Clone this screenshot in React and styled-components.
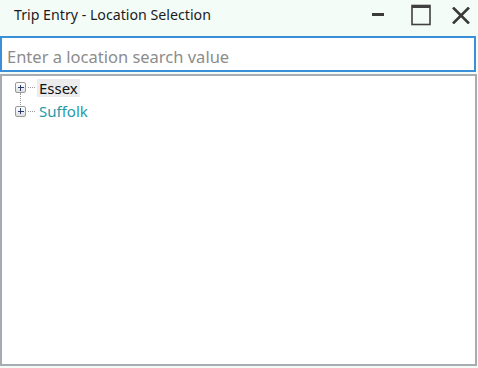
import styled, { createGlobalStyle } from 'styled-components';

const GlobalStyle = createGlobalStyle`
  html, body {
    margin: 0;
    padding: 0;
    background: #ffffff;
  }
  * { box-sizing: border-box; }
`;

const Window = styled.div`
  width: 478px;
  height: 368px;
  display: flex;
  flex-direction: column;
  background: #f4fcf8;
  font-family: "Noto Sans", "Open Sans", sans-serif;
`;

const TitleBar = styled.div`
  height: 36px;
  display: flex;
  align-items: center;
  padding: 0 8px 0 14px;
`;

const Title = styled.h1`
  flex: 1;
  margin: 0;
  font-size: 14.2px;
  font-weight: normal;
  color: #1c1c1c;
  padding-bottom: 8px;
`;

const Controls = styled.div`
  display: flex;
  align-items: center;
  padding-bottom: 6px;
`;

const ControlBtn = styled.button`
  margin-left: ${(p) => p.gap || 0}px;
  height: 30px;
  border: none;
  background: none;
  padding: 0;
  display: flex;
  align-items: center;
  justify-content: center;
`;

const Search = styled.input`
  height: 36px;
  width: 476px;
  margin: 0;
  border: 2px solid #3a8fd8;
  padding: 4px 6px 0 5px;
  font-family: "Noto Sans", "Open Sans", sans-serif;
  font-size: 16.5px;
  color: #222;
  background: #fff;
  outline: none;
  caret-color: #222;
  &::placeholder {
    color: #8c8c8c;
  }
`;

const TreePanel = styled.div`
  margin-top: 2px;
  width: 477px;
  height: 292px;
  background: #fff;
  border: 2px solid #a7abb2;
  padding: 0 0 0 13px;
`;

const Node = styled.div`
  position: relative;
  height: 23.5px;
  display: flex;
  align-items: center;
`;

const Expander = styled.span`
  width: 11px;
  height: 11px;
  border: 1px solid #9a9a9a;
  border-radius: 2px;
  background: linear-gradient(#ffffff, #dedede);
  position: relative;
  &::before {
    content: '';
    position: absolute;
    left: 1.5px;
    top: 4px;
    width: 6px;
    height: 1px;
    background: #2a3c6e;
  }
  &::after {
    content: '';
    position: absolute;
    left: 4px;
    top: 1.5px;
    width: 1px;
    height: 6px;
    background: #2a3c6e;
  }
`;

const Dots = styled.span`
  width: 7px;
  height: 1px;
  margin: 0 2px 0 2px;
  border-top: 1px dotted #9a9a9a;
`;

const VLine = styled.span`
  position: absolute;
  left: 5px;
  top: 17px;
  height: 12px;
  border-left: 1px dotted #9a9a9a;
`;

const Label = styled.span`
  font-family: "Noto Sans", "Open Sans", sans-serif;
  font-size: 15px;
  padding: 0 2px;
  line-height: 18px;
  color: ${(p) => p.color || '#111'};
  background: ${(p) => (p.selected ? '#ececec' : 'transparent')};
`;

const nodes = [
  { name: 'Essex', selected: true, color: '#111', last: false },
  { name: 'Suffolk', selected: false, color: '#2699a6', last: true },
];

export default function App() {
  return (
    <Window>
      <GlobalStyle />
      <TitleBar>
        <Title>Trip Entry - Location Selection</Title>
        <Controls>
          <ControlBtn>
            <svg width="12" height="6" viewBox="0 0 12 6">
              <rect x="0" y="1" width="12" height="3" fill="#3a3a3a" />
            </svg>
          </ControlBtn>
          <ControlBtn gap={27}>
            <svg width="20" height="22" viewBox="0 0 20 22">
              <rect x="1" y="1.5" width="18" height="19" fill="none" stroke="#404040" strokeWidth="1.6" />
              <rect x="1" y="1" width="18" height="3" fill="#404040" />
            </svg>
          </ControlBtn>
          <ControlBtn gap={21}>
            <svg width="18" height="17" viewBox="0 0 18 17">
              <path d="M1 0.5 L17 16.5 M17 0.5 L1 16.5" stroke="#3a3a3a" strokeWidth="2.6" />
            </svg>
          </ControlBtn>
        </Controls>
      </TitleBar>
      <Search placeholder="Enter a location search value" autoFocus />
      <TreePanel>
        {nodes.map((n) => (
          <Node key={n.name}>
            <Expander />
            <Dots />
            <Label selected={n.selected} color={n.color}>
              {n.name}
            </Label>
            {!n.last && <VLine />}
          </Node>
        ))}
      </TreePanel>
    </Window>
  );
}
